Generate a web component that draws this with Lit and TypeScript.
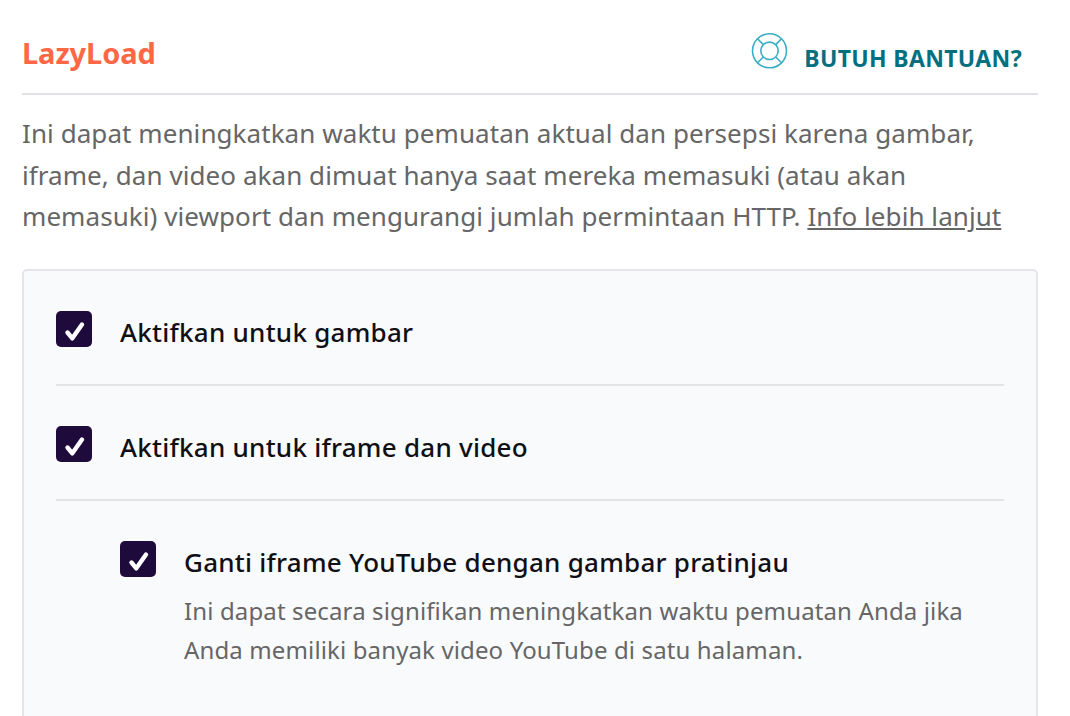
import { LitElement, html, css } from "lit";
import { customElement } from "lit/decorators.js";

const check = html`<svg viewBox="0 0 36 36" width="36" height="36" aria-hidden="true"><path d="M11.5 21.5 L16.3 27.3 L26 13.5" fill="none" stroke="#fff" stroke-width="4.4" stroke-linecap="round" stroke-linejoin="round"/></svg>`;

@customElement("app-root")
export class AppRoot extends LitElement {
  static styles = css`
    :host { display: block; width: 1070px; height: 716px; overflow: hidden; background: #fff; font-family: "Noto Sans", "Open Sans", sans-serif; box-sizing: border-box; padding: 0 32px 0 22px; }
    .head { height: 95px; box-sizing: border-box; border-bottom: 2px solid #e0e2e8; display: flex; justify-content: space-between; }
    h3 { margin: 0; padding-top: 33px; font-size: 29px; line-height: 40px; font-weight: 700; color: #ff6745; letter-spacing: -0.1px; }
    .help { display: flex; align-items: flex-start; padding: 32px 16px 0 0; gap: 15px; color: #04707f; font-weight: 700; font-size: 23px; letter-spacing: 0.35px; }
    .help span { line-height: 40px; margin-top: 6px; }
    .help svg { margin-top: -1px; }
    .intro { margin: 18px 0 31px; font-size: 26px; line-height: 41.6px; color: #666; letter-spacing: 0.07px; }
    .intro a { color: inherit; text-decoration: underline; }
    .card { border: 2px solid #e4e6eb; border-bottom: none; border-radius: 5px 5px 0 0; background: #f9fafc; padding: 40px 32px 0; height: 460px; box-sizing: border-box; }
    .row { display: flex; gap: 28px; align-items: flex-start; }
    .sep { border-bottom: 2px solid #e2e4e8; padding-bottom: 31px; margin-bottom: 40px; }
    .nested { padding-left: 64px; }
    .box { flex: none; width: 36px; height: 36px; border-radius: 5px; background: #1f0a3c; }
    .box svg { display: block; }
    .label { font-size: 26px; font-weight: 500; line-height: 42px; color: #101014; letter-spacing: 0.25px; }
    .desc { font-size: 24px; line-height: 39.5px; color: #666; margin-top: 8px; letter-spacing: 0.13px; }
  `;
  render() {
    return html`
      <div class="head">
        <h3>LazyLoad</h3>
        <div class="help">
          <svg width="38" height="38" viewBox="0 0 38 38" fill="none" stroke="#3aaec4" stroke-width="1.6" aria-hidden="true">
            <circle cx="18.5" cy="19.8" r="17"/>
            <circle cx="18.5" cy="19.8" r="8.7"/>
            <path d="M6.5 7.8 L12.3 13.6 M30.5 7.8 L24.7 13.6 M6.5 31.8 L12.3 26 M30.5 31.8 L24.7 26"/>
          </svg>
          <span>BUTUH BANTUAN?</span>
        </div>
      </div>
      <p class="intro">Ini dapat meningkatkan waktu pemuatan aktual dan persepsi karena gambar, iframe, dan video akan dimuat hanya saat mereka memasuki (atau akan memasuki) viewport dan mengurangi jumlah permintaan HTTP. <a href="#">Info lebih lanjut</a></p>
      <div class="card">
        <div class="row sep"><div class="box">${check}</div><div class="label">Aktifkan untuk gambar</div></div>
        <div class="row sep"><div class="box">${check}</div><div class="label">Aktifkan untuk iframe dan video</div></div>
        <div class="row nested"><div class="box">${check}</div><div><div class="label">Ganti iframe YouTube dengan gambar pratinjau</div><div class="desc">Ini dapat secara signifikan meningkatkan waktu pemuatan Anda jika Anda memiliki banyak video YouTube di satu halaman.</div></div></div>
      </div>
    `;
  }
}
